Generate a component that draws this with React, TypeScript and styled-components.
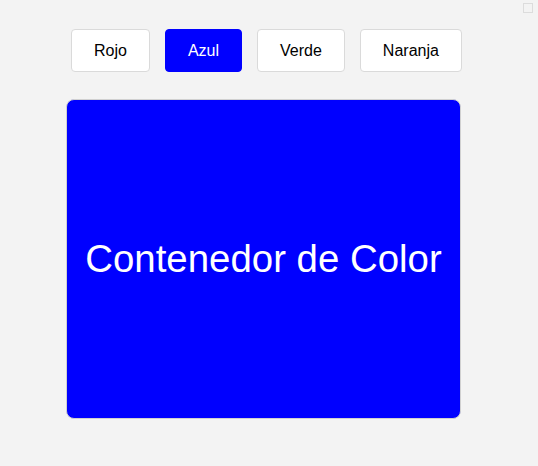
import React, { useState } from 'react';
import styled, { createGlobalStyle } from 'styled-components';

const GlobalStyle = createGlobalStyle`
  html, body {
    margin: 0;
    padding: 0;
    background: #f3f3f3;
    font-family: 'Liberation Sans', Arial, sans-serif;
  }
`;

const Page = styled.div`
  position: relative;
  width: 538px;
  height: 466px;
  padding-top: 29px;
  box-sizing: border-box;
`;

const ButtonRow = styled.div`
  display: flex;
  gap: 15px;
  padding-left: 71px;
`;

const ColorButton = styled.button<{ active: boolean }>`
  height: 43px;
  padding: 0 22px;
  border: 1px solid ${(p) => (p.active ? '#0000ff' : '#dadada')};
  border-radius: 4px;
  background: ${(p) => (p.active ? '#0000ff' : '#ffffff')};
  color: ${(p) => (p.active ? '#ffffff' : '#000000')};
  font-family: 'Liberation Sans', Arial, sans-serif;
  font-size: 16px;
  cursor: pointer;
`;

const ColorBox = styled.div<{ color: string }>`
  width: 395px;
  height: 320px;
  margin: 27px 0 0 66px;
  box-sizing: border-box;
  border: 1px solid #d0d0d0;
  border-radius: 8px;
  background: ${(p) => p.color};
  display: flex;
  align-items: center;
  justify-content: center;
  color: #ffffff;
  font-size: 38.4px;
`;

const Corner = styled.div`
  position: absolute;
  top: 3px;
  right: 5px;
  width: 8px;
  height: 8px;
  border: 1px solid #dcdcdc;
`;

const colors = [
  { name: 'Rojo', value: '#ff0000' },
  { name: 'Azul', value: '#0000ff' },
  { name: 'Verde', value: '#008000' },
  { name: 'Naranja', value: '#ffa500' },
];

export default function App() {
  const [current, setCurrent] = useState('Azul');
  const selected = colors.find((c) => c.name === current);

  return (
    <Page>
      <GlobalStyle />
      <Corner />
      <ButtonRow>
        {colors.map((c) => (
          <ColorButton key={c.name} active={c.name === current} onClick={() => setCurrent(c.name)}>
            {c.name}
          </ColorButton>
        ))}
      </ButtonRow>
      <ColorBox color={selected ? selected.value : '#0000ff'}>Contenedor de Color</ColorBox>
    </Page>
  );
}
